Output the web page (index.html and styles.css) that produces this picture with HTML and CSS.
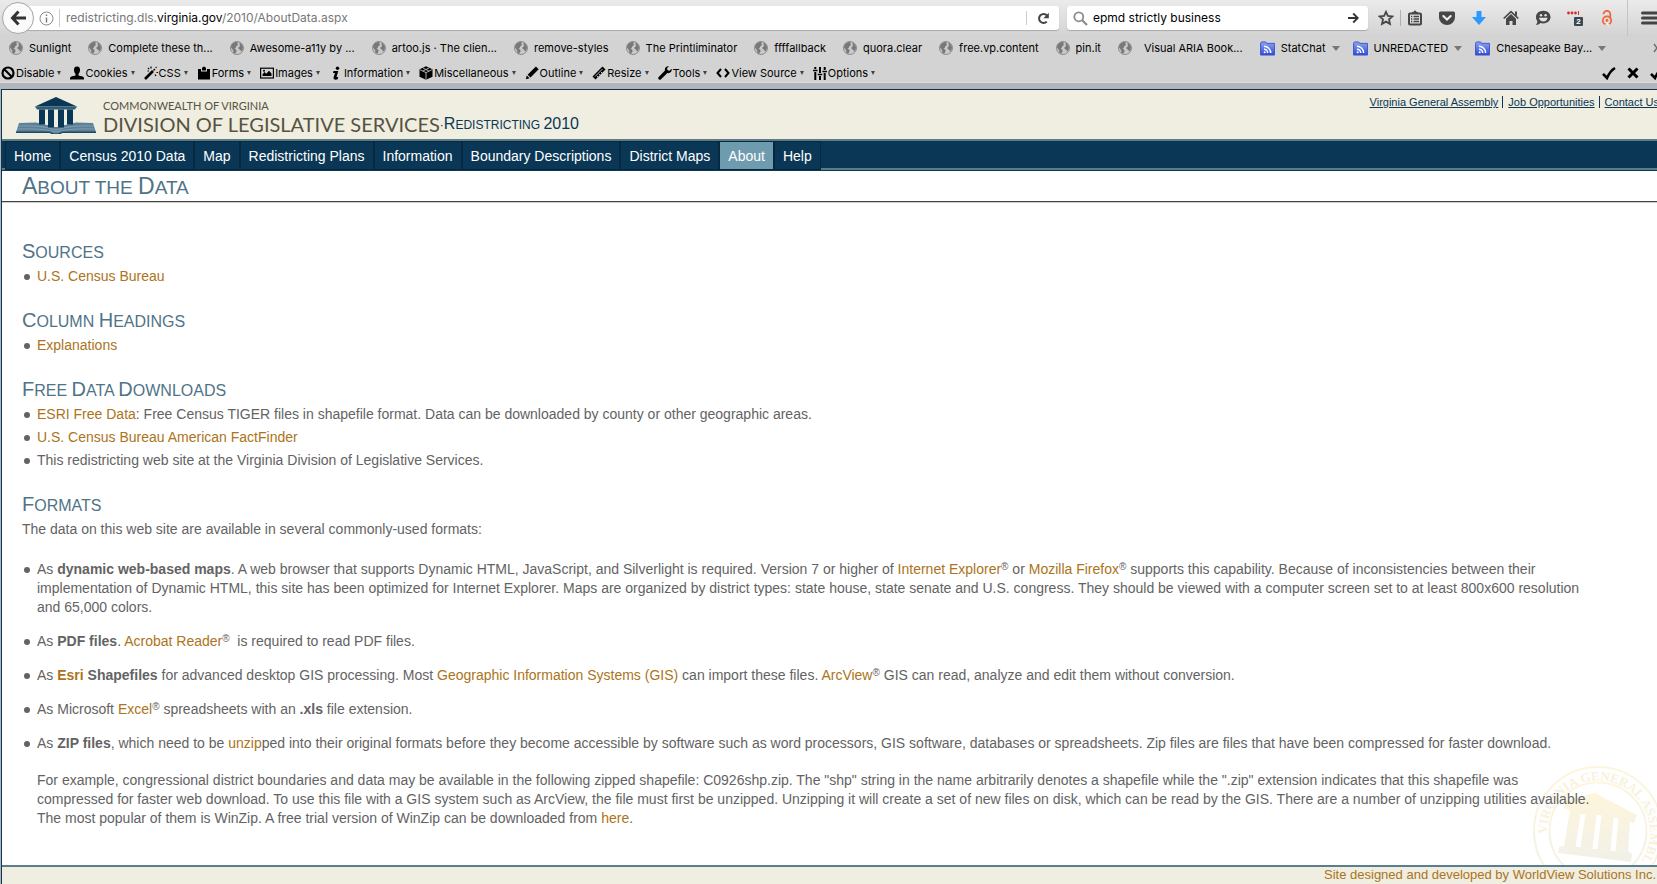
FILE: index.html
```html
<!DOCTYPE html>
<html lang="en">
<head>
<meta charset="utf-8">
<title>About the Data - Redistricting 2010</title>
<link rel="stylesheet" href="styles.css">
</head>
<body>
<svg class="sprite" aria-hidden="true">
  <defs>
    <linearGradient id="folder-fill" x1="0" y1="0" x2="0" y2="1"><stop offset="0" stop-color="#8ea6f0"/><stop offset="1" stop-color="#2f49d8"/></linearGradient>
    <linearGradient id="seal-fill" x1="0" y1="0" x2="0" y2="1"><stop offset="0" stop-color="#fdf6dc"/><stop offset="1" stop-color="#f2f0e8"/></linearGradient>
    <symbol id="globe" viewBox="0 0 14 14"><circle cx="7" cy="7" r="6.500" fill="#c9c9c9" stroke="#8c8c8c"/><path d="M1 6.200C1.300 3.200 3.800 1 6.600 1L8 1.800 7.200 3.200 8.300 4 6.300 5.200 5.600 7.300 4.300 7.600 6.600 9 6.300 11 5 12.800 3.400 11.800 3.200 9.400zM9.200 1.500C11.200 2.300 12.800 4.200 13 6.500L12.500 9 11 10.800 10.300 8.800 8.600 8 8.500 6.200 10 5.200z" fill="#787878"/></symbol>
    <symbol id="folder" viewBox="0 0 16 16"><path d="M.5 2.500 1.500 1H6l1 1.500h8.500v12.500H.5z" fill="url(#folder-fill)" stroke="#3c55c8"/><path d="M4.200 8.800a4 4 0 0 1 4 4M4.200 5.600a7.200 7.200 0 0 1 7.200 7.200" fill="none" stroke="#fff" stroke-width="1.600"/><circle cx="5" cy="12" r="1.100" fill="#fff"/></symbol>
  </defs>
</svg>

<header class="browser">
  <div class="navbar">
    <div class="address-group">
      <button class="back" type="button" aria-label="Back"><svg width="17" height="16" viewBox="0 0 17 16"><path d="M8.500 1.500 2.500 8l6 6.500M3 8h13" fill="none" stroke="#333" stroke-width="3"/></svg></button>
      <div class="address">
        <svg width="15" height="15" viewBox="0 0 15 15"><circle cx="7.500" cy="7.500" r="6.500" fill="none" stroke="#8a8a8a"/><path d="M7.500 6.500v5M7.500 3.500v1.500" stroke="#777" stroke-width="1.400"/></svg>
        <div class="url" role="textbox" aria-label="Address" contenteditable="true">redistricting.dls.<span class="domain">virginia.gov</span>/2010/AboutData.aspx</div>
        <button class="reload" type="button" aria-label="Reload"><svg width="13" height="13" viewBox="0 0 13 13"><path d="M9.800 9.600A4.500 4.500 0 1 1 9.800 3.300" fill="none" stroke="#444" stroke-width="2"/><path d="M11.800.8v5.400H6.400z" fill="#444"/></svg></button>
      </div>
    </div>
    <div class="search">
      <svg width="15" height="15" viewBox="0 0 15 15"><circle cx="5.800" cy="5.800" r="4.500" fill="none" stroke="#8c8c8c" stroke-width="1.800"/><path d="m9 9 5 5" stroke="#8c8c8c" stroke-width="2.200"/></svg>
      <input type="text" aria-label="Search" value="epmd strictly business">
      <button type="button" aria-label="Go"><svg width="11" height="12" viewBox="0 0 11 12"><path d="M0 6h9M5.200 1.500 9.800 6l-4.600 4.500" fill="none" stroke="#333" stroke-width="1.800"/></svg></button>
    </div>
    <div class="tools">
      <button type="button" aria-label="Bookmark"><svg width="16" height="16" viewBox="0 0 16 16"><path d="m8 1.800 1.900 4.100 4.500.5-3.400 3 1 4.500L8 11.600l-4 2.300 1-4.500-3.400-3 4.500-.5z" fill="none" stroke="#474747" stroke-width="1.800"/></svg></button>
      <button class="lined" type="button" aria-label="Library"><svg width="16" height="16" viewBox="0 0 16 16"><path d="M5 3.500V2h1.500a1.500 1.500 0 0 1 3 0H11v1.500z" fill="#474747"/><rect x="2" y="3.500" width="12" height="11" rx="1" fill="none" stroke="#474747" stroke-width="2"/><path d="M4 6.500h1.300M6.500 6.500H12M4 9h1.300M6.500 9H12M4 11.500h1.300M6.500 11.500H12" stroke="#474747" stroke-width="1.500"/></svg></button>
      <button type="button" aria-label="Pocket"><svg width="16" height="16" viewBox="0 0 16 16"><path d="M1.500 1.500h13Q16 1.500 16 3v4.500a8 7.500 0 0 1-16 0V3Q0 1.500 1.500 1.500z" fill="#474747"/><path d="m4.300 6 3.700 3.600L11.700 6" fill="none" stroke="#eee" stroke-width="2.100" stroke-linecap="round"/></svg></button>
      <button type="button" aria-label="Downloads"><svg width="16" height="16" viewBox="0 0 16 16"><path d="M5.500 1h5v6H15l-7 8-7-8h4.500z" fill="#2b9afc"/></svg></button>
      <button type="button" aria-label="Home"><svg width="16" height="16" viewBox="0 0 16 16"><path d="M.7 8.500 8 1.600l7.300 6.900" fill="none" stroke="#474747" stroke-width="1.700"/><path d="M12 1.500h2v5l-2-2zM3 8.700l5-4.600 5 4.600V15H9.500v-4h-3v4H3z" fill="#474747"/></svg></button>
      <button type="button" aria-label="Chat"><svg width="16" height="16" viewBox="0 0 16 16"><path d="M8.300.8c4.300 0 7.200 2.800 7.200 6.300s-2.900 6.300-7.200 6.300c-1 0-2-.2-2.800-.5-1.200 1.300-2.900 2-4.900 2 1-.8 1.700-1.900 1.800-3.300A6 6 0 0 1 1 7.100C1 3.600 4 .8 8.300.8z" fill="#474747"/><circle cx="6" cy="5.200" r="1.200" fill="#e4e4e4"/><circle cx="10.600" cy="5.200" r="1.200" fill="#e4e4e4"/><path d="M4 7.800h8.600Q12 11.400 8.300 11.400T4 7.800z" fill="#e4e4e4"/></svg></button>
      <button class="badged" type="button" aria-label="Passwords"><svg width="16" height="16" viewBox="0 0 16 16"><circle cx="1.500" cy="3" r="1.400" fill="#d32d27"/><circle cx="5" cy="3" r="1.400" fill="#d32d27"/><circle cx="8.500" cy="3" r="1.400" fill="#d32d27"/><path d="M11.500 1v4" stroke="#d32d27"/></svg><span class="badge">2</span></button>
      <button type="button" aria-label="Open access"><svg width="16" height="16" viewBox="0 0 16 16"><path d="M4.500 4.200a3.300 3.300 0 0 1 6.800 0V9" fill="none" stroke="#f0653d" stroke-width="1.800"/><circle cx="8" cy="10.500" r="4.200" fill="none" stroke="#f0653d" stroke-width="1.800"/><circle cx="8" cy="10.500" r="1.400" fill="#f0653d"/><path d="M8 11.500 11 15.500H6z" fill="#eee"/></svg></button>
    </div>
    <button class="menu" type="button" aria-label="Menu"><svg width="16" height="14" viewBox="0 0 16 14"><path d="M1.500 2h14M1.500 7h14M1.500 12h14" stroke="#444" stroke-width="3" stroke-linecap="round"/></svg></button>
  </div>

  <nav class="bookmarks" aria-label="Bookmarks">
    <a href="#"><svg><use href="#globe"/></svg>Sunlight</a>
    <a href="#"><svg><use href="#globe"/></svg>Complete these th...</a>
    <a href="#"><svg><use href="#globe"/></svg>Awesome-a11y by ...</a>
    <a href="#"><svg><use href="#globe"/></svg>artoo.js · The clien...</a>
    <a href="#"><svg><use href="#globe"/></svg>remove-styles</a>
    <a href="#"><svg><use href="#globe"/></svg>The Printliminator</a>
    <a href="#"><svg><use href="#globe"/></svg>ffffallback</a>
    <a href="#"><svg><use href="#globe"/></svg>quora.clear</a>
    <a href="#"><svg><use href="#globe"/></svg>free.vp.content</a>
    <a href="#"><svg><use href="#globe"/></svg>pin.it</a>
    <a class="spaced" href="#"><svg><use href="#globe"/></svg>Visual ARIA Book...</a>
    <button class="feed" type="button"><svg><use href="#folder"/></svg>StatChat<i></i></button>
    <button class="feed" type="button"><svg><use href="#folder"/></svg>UNREDACTED<i></i></button>
    <button class="feed" type="button"><svg><use href="#folder"/></svg>Chesapeake Bay...<i></i></button>
    <button class="more" type="button" aria-label="More bookmarks"><svg viewBox="0 0 8 10"><path d="m1 1 3 4-3 4M4.500 1l3 4-3 4" fill="none" stroke="#666" stroke-width="1.300"/></svg></button>
  </nav>

  <div class="devbar">
    <button type="button"><svg viewBox="0 0 14 14"><circle cx="7" cy="7" r="5.500" fill="none" stroke="#000" stroke-width="2.200"/><path d="m3 3 8 8" stroke="#000" stroke-width="2.200"/></svg>Disable<i></i></button>
    <button type="button"><svg viewBox="0 0 14 14"><path d="M7 .5c2.200 0 3.200 1.500 3 3.700-.1 1.800-.8 3-1.500 3.700v1.600c2.500.6 5 1 5.500 2.200V13.500H0v-1.800c.5-1.200 3-1.600 5.500-2.200V7.900C4.800 7.200 4.100 6 4 4.200 3.800 2 4.800.5 7 .5z"/></svg>Cookies<i></i></button>
    <button type="button"><svg viewBox="0 0 14 14"><path d="m1 13 8-8" stroke="#000" stroke-width="2.600"/><path d="m9.500 4.500 1.500-1.500M7 .5v2M12.500 6.500h1.500M4 2l1.200 1.200M12.500 1l-.8.800M11 8.500l1 1.500M3.500 5H5" stroke="#000" stroke-width="1.200"/></svg>CSS<i></i></button>
    <button type="button"><svg viewBox="0 0 14 14"><path d="M1 3h3v2.500h6V3h3v10.500H1zM5 4.500V2.300L6 .8h2L9 2.300v2.200z"/></svg>Forms<i></i></button>
    <button type="button"><svg viewBox="0 0 14 14"><rect x=".6" y="2.200" width="12.800" height="9.800" fill="none" stroke="#000" stroke-width="1.200"/><path d="M2.500 10V8.200L4.500 6l1.800 1.700L9 4.800 11.500 7.500V10z"/><circle cx="4" cy="4.700" r="1"/></svg>Images<i></i></button>
    <button type="button"><svg viewBox="0 0 14 14"><circle cx="8.500" cy="2.200" r="1.700"/><path d="M4.500 5h4.800l-1.800 6h1.700l-.5 2.200c-2.500 1-4.800.4-4-2.200L6 7H4z"/></svg>Information<i></i></button>
    <button type="button"><svg viewBox="0 0 14 14"><path d="M7 .3 13.500 3.300v7.400L7 13.800.5 10.700V3.300z"/><path d="M.8 3.600 7 6.600l6.200-3M7 6.600v7M3.800 1.900l6.400 3.200M10.200 1.900 3.800 5.100" fill="none" stroke="#d3d3d3" stroke-width=".8"/></svg>Miscellaneous<i></i></button>
    <button type="button"><svg viewBox="0 0 14 14"><path d="m.8 13.300 1-3.800 2.800 2.800zM2.600 8.700 10.900.5l2.800 2.800-8.200 8.200z"/></svg>Outline<i></i></button>
    <button type="button"><svg viewBox="0 0 14 14"><path d="M.5 10.500 10.500.5l3 3-10 10z"/><path d="m3 10.500 7.500-7.500M5 10l1 1M7 8l1 1M9 6l1 1" stroke="#d3d3d3" stroke-width=".9"/></svg>Resize<i></i></button>
    <button type="button"><svg viewBox="0 0 14 14"><path d="M13.700 2.800 11.500 4.700 9.500 4.200 9 2.300 11 .3C8.500-.3 6.200 2 7 4.600L.7 11a1.500 1.500 0 0 0 2.300 2.200L9.400 7c2.600.8 4.800-1.500 4.300-4.200z"/></svg>Tools<i></i></button>
    <button type="button"><svg viewBox="0 0 14 14"><path d="M5 3 1.500 7 5 11M9 3l3.500 4L9 11" fill="none" stroke="#000" stroke-width="2"/></svg>View Source<i></i></button>
    <button type="button"><svg viewBox="0 0 14 14"><path d="M2.300 1v2M2.300 6v8M7 1v6M7 10v4M11.700 1v3M11.700 7v7" stroke="#000" stroke-width="2"/><path d="M0 4.500h4.600M4.700 8.500h4.600M9.400 5.500H14" stroke="#000" stroke-width="1.400"/></svg>Options<i></i></button>
    <span class="status">
      <svg viewBox="0 0 14 14"><path d="M1 7.800 5 12Q8 5 13 2" fill="none" stroke="#000" stroke-width="2.600"/></svg>
      <svg viewBox="0 0 14 14"><path d="m2.500 2.500 9 9M11.500 2.500l-9 9" stroke="#000" stroke-width="3"/></svg>
      <svg viewBox="0 0 14 14"><path d="M1 7.800 5 12Q8 5 13 2" fill="none" stroke="#000" stroke-width="2.600"/></svg>
    </span>
  </div>
</header>

<div class="page">
  <header class="masthead">
    <svg class="logo" width="80" height="37" viewBox="0 0 80 37" aria-hidden="true">
      <path d="M3 26 20 25.500 40 30l20-4.500 17 .500 3 9.500H46q-3 2-6 2t-6-2H0z" fill="#5b8099"/>
      <path d="M2 29q24-1 38 4 14-5 38-4M1 32q24-1 39 3 15-4 38-3" fill="none" stroke="#8ba5b3" stroke-width=".8"/>
      <path d="M0 35.300h34q3 2 6 2t6-2h34" fill="none" stroke="#1d4965" stroke-width="1.400"/>
      <path d="M19 9.500 40 0l21 9.500z" fill="#0a3755"/><path d="M19 9.500h42l-2 3H21z" fill="#315d78"/>
      <path d="M23 12.500h6v15h-6zM32 12.500h6v18h-6zM42 12.500h6v18h-6zM51 12.500h6v15h-6z" fill="#0a3755"/>
      <path d="M29 13h3v15l-3-1zM38 13h4v17h-4zM48 13h3v14l-3 1z" fill="#f0ede1"/>
    </svg>
    <div class="brand">
      <span class="state">COMMONWEALTH OF VIRGINIA</span>
      <span class="division">DIVISION OF LEGISLATIVE SERVICES</span>
    </div>
    <span class="project">·<b>R</b>edistricting <b>2010</b></span>
    <nav class="quick" aria-label="Quick links">
      <a href="#">Virginia General Assembly</a>
      <a href="#">Job Opportunities</a>
      <a href="#">Contact Us</a>
    </nav>
  </header>
  <nav class="mainnav" aria-label="Main">
    <a href="#">Home</a><a href="#">Census 2010 Data</a><a href="#">Map</a><a href="#">Redistricting Plans</a><a href="#">Information</a><a href="#">Boundary Descriptions</a><a href="#">District Maps</a><a class="current" href="#" aria-current="page">About</a><a href="#">Help</a>
  </nav>
  <h1><b>A</b>bout the <b>D</b>ata</h1>

  <main>
    <section>
      <h2><b>S</b>ources</h2>
      <ul><li><a href="#">U.S. Census Bureau</a></li></ul>
    </section>
    <section>
      <h2><b>C</b>olumn <b>H</b>eadings</h2>
      <ul><li><a href="#">Explanations</a></li></ul>
    </section>
    <section>
      <h2><b>F</b>ree <b>D</b>ata <b>D</b>ownloads</h2>
      <ul>
        <li><a href="#">ESRI Free Data</a>: Free Census TIGER files in shapefile format. Data can be downloaded by county or other geographic areas.</li>
        <li><a href="#">U.S. Census Bureau American FactFinder</a></li>
        <li>This redistricting web site at the Virginia Division of Legislative Services.</li>
      </ul>
    </section>
    <section>
      <h2><b>F</b>ormats</h2>
      <p class="intro">The data on this web site are available in several commonly-used formats:</p>
      <ul class="formats">
        <li>As <strong>dynamic web-based maps</strong>. A web browser that supports Dynamic HTML, JavaScript, and Silverlight is required. Version 7 or higher of <a href="#">Internet Explorer</a><sup>®</sup> or <a href="#">Mozilla Firefox</a><sup>®</sup> supports this capability. Because of inconsistencies between their implementation of Dynamic HTML, this site has been optimized for Internet Explorer. Maps are organized by district types: state house, state senate and U.S. congress. They should be viewed with a computer screen set to at least 800x600 resolution and 65,000 colors.</li>
        <li>As <strong>PDF files</strong>. <a href="#">Acrobat Reader</a><sup>®</sup>&nbsp; is required to read PDF files.</li>
        <li>As <strong><a href="#">Esri</a> Shapefiles</strong> for advanced desktop GIS processing. Most <a href="#">Geographic Information Systems (GIS)</a> can import these files. <a href="#">ArcView</a><sup>®</sup> GIS can read, analyze and edit them without conversion.</li>
        <li>As Microsoft <a href="#">Excel</a><sup>®</sup> spreadsheets with an <strong>.xls</strong> file extension.</li>
        <li>As <strong>ZIP files</strong>, which need to be <a href="#">unzip</a>ped into their original formats before they become accessible by software such as word processors, GIS software, databases or spreadsheets. Zip files are files that have been compressed for faster download.
          <p>For example, congressional district boundaries and data may be available in the following zipped shapefile: C0926shp.zip. The "shp" string in the name arbitrarily denotes a shapefile while the ".zip" extension indicates that this shapefile was compressed for faster web download. To use this file with a GIS system such as ArcView, the file must first be unzipped. Unzipping it will create a set of new files on disk, which can be read by the GIS. There are a number of unzipping utilities available. The most popular of them is WinZip. A free trial version of WinZip can be downloaded from <a href="#">here</a>.</p>
        </li>
      </ul>
    </section>
    <svg class="seal" width="124" height="99" viewBox="0 0 124 99" aria-hidden="true">
      <circle cx="65" cy="65" r="64" fill="none" stroke="url(#seal-fill)" stroke-width="2"/>
      <circle cx="65" cy="65" r="48.500" fill="none" stroke="url(#seal-fill)" stroke-width="2"/>
      <path id="seal-arc" d="M14 68A51.500 51.500 0 1 1 108 95" fill="none"/>
      <text class="seal-text"><textPath href="#seal-arc">VIRGINIA GENERAL ASSEMBLY</textPath></text>
      <path d="M33 34 62 27l42 22-3 8-4-1-2 29 4 3-1 8-73-9 1-6 5-1 6-36-6-2z" fill="url(#seal-fill)"/>
      <path d="m50 48-5 33M66 49l-4 34M83 52l-3 33" stroke="#fff" stroke-width="5"/>
    </svg>
  </main>
  <footer><a href="#">Site designed and developed by WorldView Solutions Inc.</a></footer>
</div>
</body>
</html>
```
FILE: styles.css
```css
* { box-sizing: border-box; }

body {
  margin: 0;
  min-height: 100vh;
  display: flex;
  flex-direction: column;
  overflow: hidden;
  background: #b4b4bb;
  color: #636363;
  font: 14px/19px "Liberation Sans", Arial, sans-serif;
}

a { color: #ab7420; text-decoration: none; }
button { margin: 0; padding: 0; border: 0; background: none; color: inherit; font: inherit; }
svg { display: block; flex: none; }
.sprite { position: absolute; width: 0; height: 0; }

/* Browser chrome */
.browser {
  height: 83px;
  overflow: hidden;
  border-bottom: 1px solid #dedede;
  background: linear-gradient(#ebebeb, #d3d3d3 36px);
  color: #000;
  font: 11px/14px Inter, Roboto, sans-serif;
}
.navbar { display: flex; height: 36px; align-items: center; padding-left: 2px; }
.address-group { display: flex; flex: 1; align-items: center; }
.back {
  display: grid;
  z-index: 1;
  width: 32px;
  height: 32px;
  place-items: center;
  border: 1px solid #a5a5a5;
  border-radius: 50%;
  background: #fafafa;
}
.address, .search {
  display: flex;
  height: 24px;
  align-items: center;
  border-radius: 3px;
  background: #fff;
  box-shadow: 0 1px 1px #aaa;
}
.address { flex: 1; margin-left: -8px; padding-left: 13px; }
.url { flex: 1; height: 18px; margin-left: 5px; padding-left: 6px; border-left: 1px solid #ccc; color: #777; font-size: 12px; line-height: 18px; }
.domain { color: #000; }
.reload { display: grid; width: 33px; height: 14px; place-items: center; border-left: 1px solid #ccc; }
.search { width: 301px; margin-left: 8px; padding: 0 9px 0 6px; }
.search input { flex: 1; min-width: 0; margin-left: 5px; padding: 0; border: 0; outline: 0; background: none; color: #000; font: 12px/18px Inter, Roboto, sans-serif; }
.tools { display: flex; gap: 16px; padding-left: 10px; }
.tools .lined { margin-left: -10px; padding-left: 6px; border-left: 1px solid #b0b0b0; }
.badged { position: relative; }
.badge { position: absolute; right: 0; bottom: 0; width: 9px; border-radius: 1px; background: #3b4850; color: #fff; font: bold 8px/9px "Liberation Sans", sans-serif; }
.menu { height: 36px; margin-left: 12px; padding-left: 13px; border-left: 1px solid #c4c4c4; }

.bookmarks { display: flex; height: 24px; align-items: center; padding-left: 9px; white-space: nowrap; }
.bookmarks a, .bookmarks button { display: flex; align-items: center; margin-right: 17px; color: #000; }
.bookmarks svg { width: 14px; height: 14px; margin-right: 6px; }
.bookmarks .spaced svg { margin-right: 12px; }
.bookmarks .feed svg { width: 15px; height: 15px; }
.bookmarks .feed { margin-right: 13px; }
.bookmarks i { margin-left: 6px; border: 4px solid transparent; border-top: 5px solid #777; border-bottom: 0; }
.bookmarks .more { margin: 0 -4px 0 auto; }
.bookmarks .more svg { width: 8px; height: 10px; margin: 0; }

.devbar { display: flex; height: 23px; align-items: center; padding: 2px 0 0 1px; white-space: nowrap; }
.devbar button { display: flex; align-items: center; margin-right: 9px; }
.devbar svg { width: 14px; height: 14px; margin-right: 1px; }
.devbar i { margin-left: 3px; border: 2px solid transparent; border-top: 4px solid #444; border-bottom: 0; }
.status { display: flex; gap: 9px; margin: 0 -8px 0 auto; }

/* Site */
.page {
  display: flex;
  flex: 1;
  flex-direction: column;
  margin: 6px 0 0 1px;
  border: solid #0a3755;
  border-width: 1px 0 0 1px;
  background: #fff;
}
.masthead { display: flex; height: 49px; align-items: flex-start; padding: 7px 0 0 14px; background: #f0ede1; }
.brand { display: flex; flex-direction: column; margin-left: 7px; color: #56533f; font-family: Lato, sans-serif; }
.state { font-size: 11px; line-height: 18px; }
.division { font-size: 20px; line-height: 18px; white-space: nowrap; }
.project { padding-top: 17px; color: #0a3755; font-size: 12px; line-height: 20px; text-transform: uppercase; white-space: nowrap; }
.project b { font-size: 16px; font-weight: 400; }
.quick { display: flex; margin: -1px -2px 0 auto; font-size: 11px; line-height: 12px; white-space: nowrap; }
.quick a { margin-left: 4px; color: #0a3755; text-decoration: underline; }
.quick a + a { padding-left: 5px; border-left: 1px solid #0a3755; }

.mainnav { display: flex; height: 32px; padding-left: 3px; border-top: 2px solid #5b7d87; border-bottom: 1px solid #0a3755; background: linear-gradient(#0a3755 27px, #5b7d87 27px); }
.mainnav a { padding: 0 8px; border: 1px solid #072840; background: #0a3755; color: #fff; line-height: 28px; white-space: nowrap; }
.mainnav .current { background: #6f9baf; }

h1, h2 { margin: 0; color: #4f7487; font-weight: 400; text-transform: uppercase; }
h1 b, h2 b { font-weight: 400; line-height: 1px; }
h1 { padding: 3px 0 0 20px; border-bottom: 1px solid #444; box-shadow: 0 1px #ccc; font-size: 19px; line-height: 27px; }
h1 b { font-size: 23px; }
h2 { font-size: 16px; line-height: 24px; }
h2 b { font-size: 20px; }

main { position: relative; display: flex; flex: 1; flex-direction: column; gap: 24px; padding: 39px 65px 0 20px; }
section { position: relative; z-index: 1; }
ul { display: flex; flex-direction: column; gap: 4px; margin: 2px 0 0; padding: 0 0 0 15px; list-style: none; }
li::before { content: ""; float: left; width: 6px; height: 6px; margin: 7px 0 0 -13px; border-radius: 50%; background: #636363; }
sup { font-size: 10px; line-height: 0; vertical-align: 4px; }
.intro { margin: 2px 0 0; }
.formats { gap: 15px; margin-top: 21px; }
.formats p { margin: 18px 0 0; }
.seal { position: absolute; right: 0; bottom: 0; }
.seal-text { fill: #f8f2dc; font: bold 13px "Liberation Serif", serif; }

footer { padding: 0 1px 2px; border-top: 2px solid #5b7d8d; background: #f0ede1; font-size: 13px; line-height: 15px; text-align: right; }
```
